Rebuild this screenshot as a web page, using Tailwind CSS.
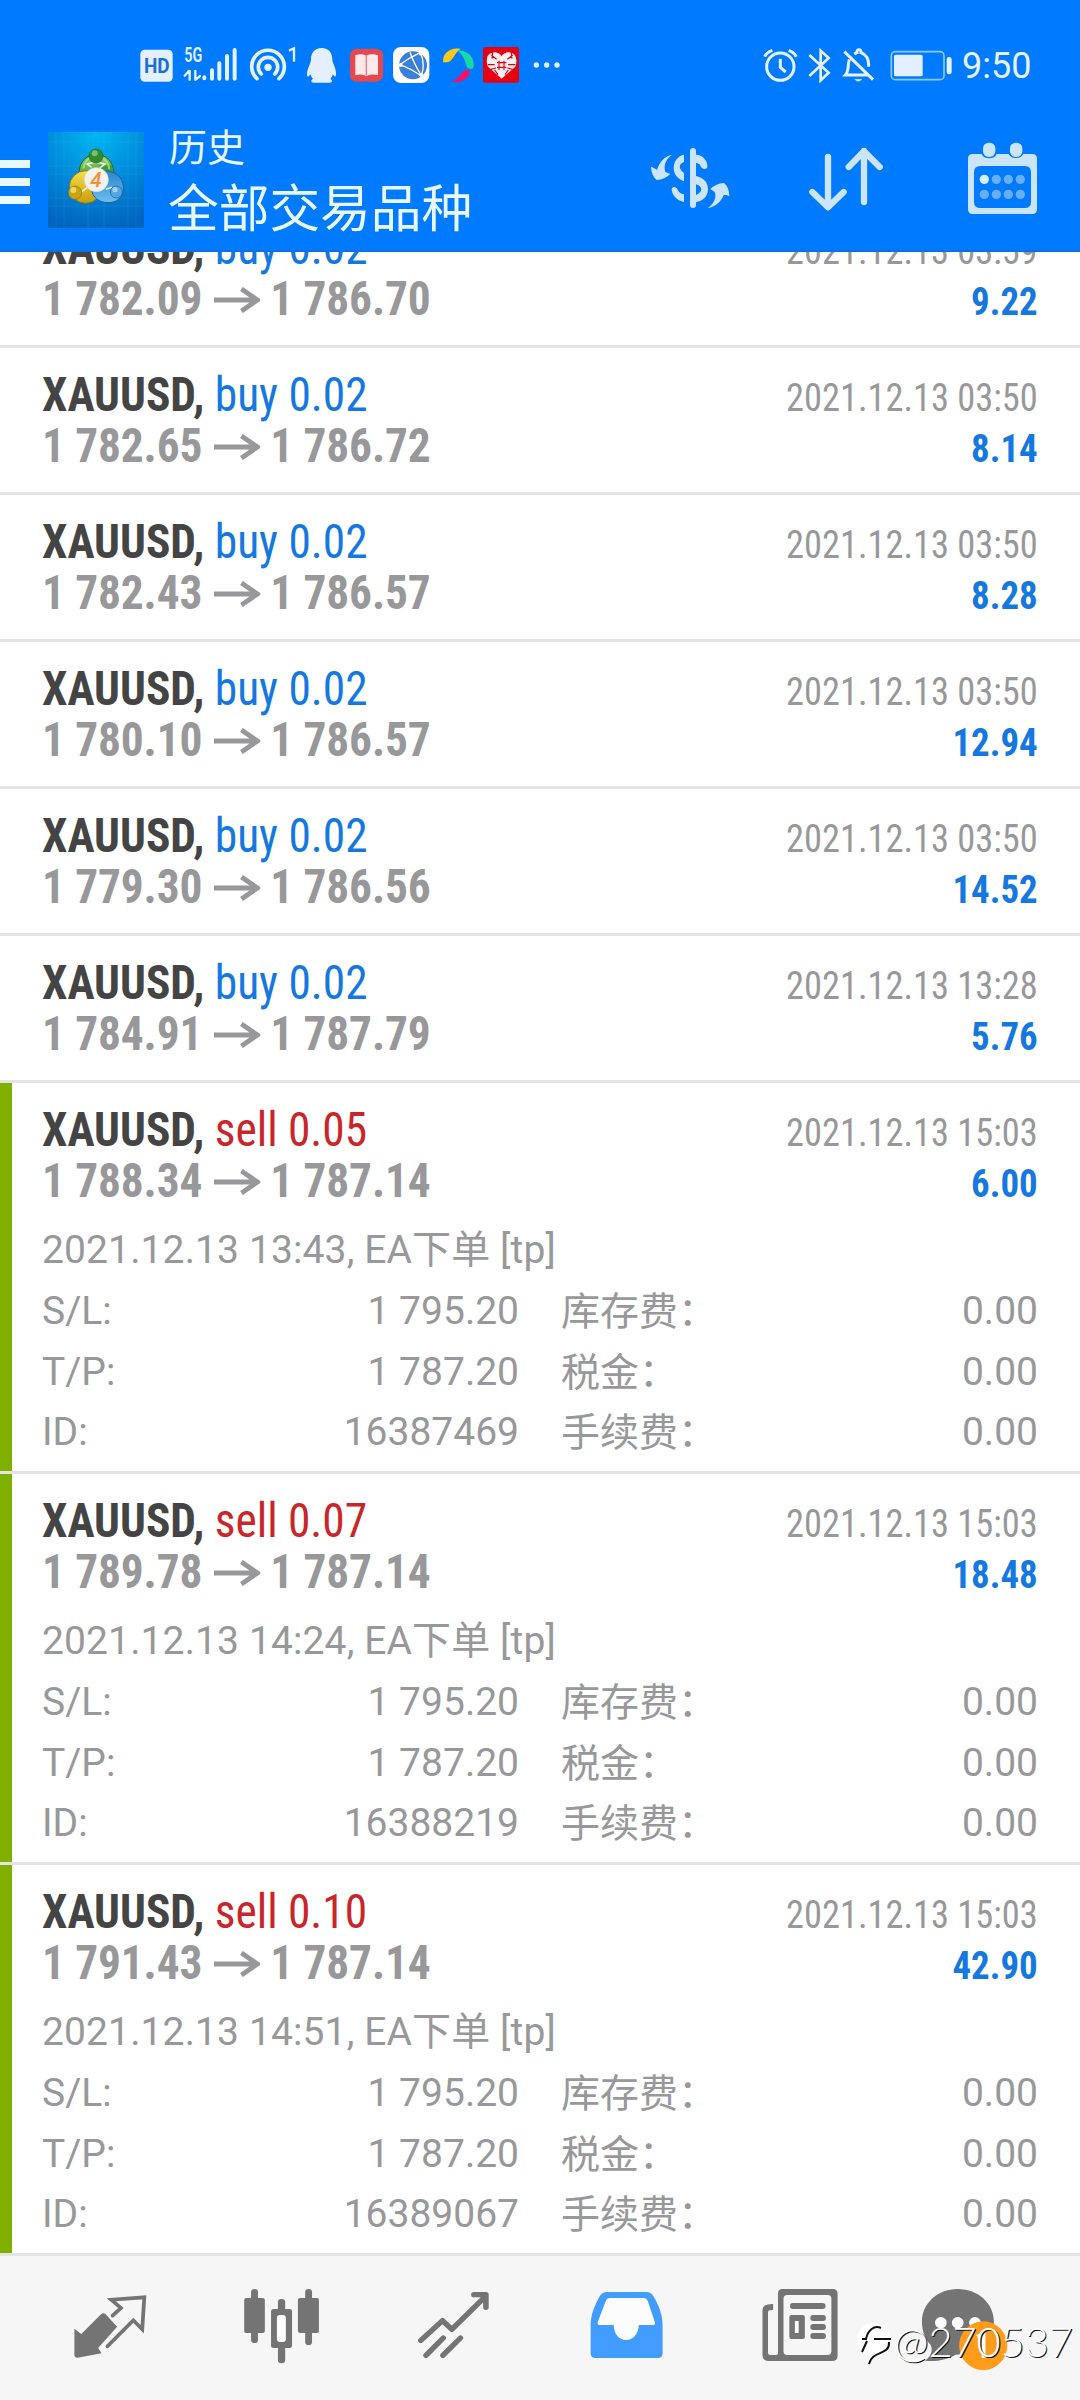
<!DOCTYPE html>
<html lang="zh-CN">
<head>
<meta charset="utf-8">
<title>历史</title>
<script src="https://cdn.jsdelivr.net/npm/@tailwindcss/browser@4"></script>
</head>
<body class="w-[1080px] h-[2400px] overflow-hidden bg-white font-['Roboto','Noto_Sans_CJK_SC',sans-serif]">
<div class="relative w-[1080px] h-[2400px] flex flex-col overflow-hidden">

<header class="h-[252px] shrink-0 bg-[#007aff] border-b-2 border-[#0c70e4] relative z-10">
  <div class="flex h-[90px] pt-[45px] pl-[140px] text-[#e4f3ff]">
    <!-- HD -->
    <svg class="w-[42px] h-[40px] shrink-0" viewBox="60 45 126 120"><rect x="61" y="59" width="97" height="96" rx="13" fill="#e4f0ff"/><text x="72" y="128" font-family="Roboto" font-weight="700" font-size="60" textLength="77" lengthAdjust="spacingAndGlyphs" fill="#1a6fd8">HD</text></svg>
    <!-- 5G signal -->
    <svg class="w-[62px] h-[40px] shrink-0 overflow-visible" viewBox="186 45 186 120"><text x="193" y="97" font-family="Roboto" font-weight="600" font-size="60" textLength="54" lengthAdjust="spacingAndGlyphs" fill="currentColor">5G</text><g stroke="currentColor" stroke-width="12" stroke-linecap="round"><path d="M253 142v3M276 121v25M298 100v46M321 78v68M344 60v86"/><path d="M209 123v26M194 137l12-13M226 123v26M240 138l-12 10" stroke-width="7"/></g></svg>
    <!-- hotspot -->
    <svg class="w-[58px] h-[40px] shrink-0" viewBox="372 45 174 120"><g fill="none" stroke="currentColor" stroke-width="11" stroke-linecap="round"><path d="M411 146a49 49 0 1 1 66 0M424 132a29 29 0 1 1 40 0"/></g><circle cx="444" cy="112" r="11" fill="currentColor"/><path d="M507 62l15-7v40" fill="none" stroke="currentColor" stroke-width="7"/></svg>
    <!-- penguin -->
    <svg class="w-[42px] h-[40px] shrink-0" viewBox="546 45 126 120"><path d="M605 54c22 0 32 15 32 34 0 8 3 12 5 18 5 12 8 25 5 33-3 3-7-4-9-6-1 6-4 11-7 14 8 4 6 11-2 11h-48c-8 0-10-7-2-11-3-3-6-8-7-14-2 2-6 9-10 6-3-8 1-21 6-33 2-6 5-10 5-18 0-19 10-34 32-34z" fill="#e4f0ff"/></svg>
    <!-- book -->
    <svg class="w-[44px] h-[40px] shrink-0" viewBox="672 45 132 120"><rect x="690" y="56" width="99" height="99" rx="20" fill="#e5484f"/><path d="M706 76q18-7 33 1 15-8 35-1v60q-20-6-35 2-15-8-33-2z" fill="#ffe9ea"/><path d="M739 77v60" stroke="#ef7a80" stroke-width="4"/></svg>
    <!-- globe -->
    <svg class="w-[50px] h-[40px] shrink-0" viewBox="804 45 150 120"><rect x="819" y="51" width="109" height="108" rx="24" fill="#fff"/><circle cx="879" cy="106" r="42" fill="#3b7fdd"/><path d="M839 104q30-22 63-37M839 104q30 10 65 34M902 68q14 36 2 70M870 67q10 30 34 70" fill="none" stroke="#fff" stroke-width="4"/><circle cx="842" cy="105" r="6" fill="#fff"/><circle cx="903" cy="71" r="6" fill="#fff"/><circle cx="904" cy="135" r="6" fill="#fff"/></svg>
    <!-- swirl -->
    <svg class="w-[42px] h-[40px] shrink-0" viewBox="954 45 126 120"><path d="M969 95c0-26 22-44 53-38-20 10-22 40-43 40-5 0-9 0-10-2z" fill="#ffc917"/><path d="M1013 62c28-2 50 18 48 44-1 14-7 12-16 9-10-6-6-34-32-53z" fill="#1bd6a6"/><path d="M992 153c24-2 34-30 45-33 10-2 15 4 11 12-9 20-34 29-56 21z" fill="#fb0f5e"/></svg>
    <!-- heart -->
    <svg class="w-[46px] h-[40px] shrink-0" viewBox="1080 45 138 120"><rect x="1089" y="51" width="108" height="107" rx="6" fill="#e60012"/><path d="M1145 146l-41-36c-5-10-5-28 1-35 12-11 28-11 40 3 11-14 28-14 39-3 6 7 7 25 2 35z" fill="#fff0f0"/><path d="M1137 92v28M1152 92v28M1131 98h28M1131 112h28M1104 104h20M1164 104h22M1114 76l16 12M1178 76l-16 12M1118 66l-2 20M1174 66l2 20M1124 120l10 14M1165 120l-10 14M1112 118l16-4M1178 118l-16-4" stroke="#e60012" stroke-width="3.5"/></svg>
    <svg class="w-[44px] h-[40px] shrink-0" viewBox="1218 45 132 120" fill="currentColor"><circle cx="1249" cy="105" r="8"/><circle cx="1280" cy="105" r="8"/><circle cx="1311" cy="105" r="8"/></svg>
    <!-- alarm -->
    <svg class="w-[40px] h-[40px] shrink-0 ml-[190px]" viewBox="60 45 120 120" fill="none" stroke="currentColor" stroke-width="9"><circle cx="121" cy="110" r="41"/><path d="M121 86v26l16 14M74 80q6-13 23-19M146 61q16 6 23 19" stroke-width="9"/></svg>
    <!-- bluetooth -->
    <svg class="w-[37px] h-[40px] shrink-0" viewBox="180 45 111 120" fill="none" stroke="currentColor" stroke-width="8"><path d="M208 75l58 53-24 23V62l24 22-58 54"/></svg>
    <!-- bell off -->
    <svg class="w-[48px] h-[40px] shrink-0" viewBox="291 45 144 120" fill="none" stroke="currentColor" stroke-width="9"><path d="M313 65l86 84M343 72q5-3 8-4c-2-12 14-12 12 0 16 6 23 16 23 42M328 88c-6 20 0 34-12 47h66"/><path d="M344 148q11 12 22 0z" fill="currentColor" stroke-width="1"/></svg>
    <!-- battery -->
    <svg class="w-[70px] h-[40px] shrink-0" viewBox="435 45 210 120"><rect x="454" y="65" width="158" height="84" rx="12" fill="none" stroke="#8cc8ff" stroke-width="5"/><rect x="462" y="74" width="86" height="65" rx="5" fill="#e4f0ff"/><rect x="620" y="81" width="15" height="52" rx="7" fill="currentColor"/></svg>
    <span class="ml-[7px] text-[36px] leading-[43px] whitespace-nowrap">9:50</span>
  </div>

  <div class="flex h-[160px]">
    <svg class="w-[30px] h-[44px] mt-[70px] shrink-0" viewBox="0 0 30 44" fill="#e8f8ff"><path d="M0 0h30v8H0zM0 18h30v8H0zM0 36h30v8H0z"/></svg>
    <svg class="w-[96px] h-[96px] mt-[42px] ml-[18px] shrink-0" viewBox="144 66 288 288">
      <defs><radialGradient id="sky" cx=".5" cy="0" r="1"><stop offset="0" stop-color="#00b8f2"/><stop offset=".6" stop-color="#0085d8"/><stop offset="1" stop-color="#0066be"/></radialGradient>
      <linearGradient id="gr" x2="0" y2="1"><stop stop-color="#8ccc62"/><stop offset="1" stop-color="#3a9432"/></linearGradient>
      <linearGradient id="ye" x2="0" y2="1"><stop stop-color="#f3df4b"/><stop offset="1" stop-color="#c99e0c"/></linearGradient>
      <linearGradient id="bl" x2="0" y2="1"><stop stop-color="#2a84cb"/><stop offset="1" stop-color="#6cc0ee"/></linearGradient></defs>
      <path fill="url(#sky)" d="M144 66h288v288H144z"/>
      <path d="M168 66v288M192 66v288M264 66v288M312 66v288M384 66v288M408 66v288M144 96h288M144 168h288M144 192h288M144 264h288M144 288h288" stroke="#5ad0ff" stroke-opacity=".16" stroke-width="2"/>
      <circle cx="289" cy="184" r="51" fill="url(#gr)" stroke="#1d6b1c" stroke-width="3"/>
      <circle cx="257" cy="231" r="49" fill="url(#ye)" stroke="#8d7410" stroke-width="3"/>
      <path d="M296 166h40q6 30-8 50z" fill="#3f9a36"/>
      <path d="M318 182c36 4 54 26 52 54s-20 42-46 42-48-16-50-42z" fill="url(#bl)" stroke="#1a5f9c" stroke-width="3"/>
      <path d="M275 172l-14-10q27-10 54 0l-16 12M236 252l26-20M318 238l18-6" fill="none" stroke="#fff" stroke-opacity=".8" stroke-width="5"/>
      <path d="M250 175q4-24 20-30M308 146q18 10 20 32" fill="none" stroke="#b6e59c" stroke-opacity=".7" stroke-width="6"/>
      <circle cx="288" cy="138" r="21" fill="#348a2e" stroke="#1d6b1c" stroke-width="2"/><circle cx="284" cy="130" r="9" fill="#9bd48a" fill-opacity=".7"/>
      <circle cx="225" cy="248" r="20" fill="#c9a414" stroke="#8d7410" stroke-width="2"/><circle cx="220" cy="240" r="9" fill="#f6e778" fill-opacity=".8"/>
      <circle cx="349" cy="246" r="18" fill="#52a5e2" stroke="#1a5f9c" stroke-width="2"/><circle cx="345" cy="239" r="8" fill="#b3dcf8" fill-opacity=".8"/>
      <circle cx="289" cy="209" r="36" fill="#f5f1ec" stroke="#d5dce0" stroke-width="2"/>
      <text x="288" y="230" text-anchor="middle" font-family="Roboto" font-style="italic" font-weight="500" font-size="62" fill="#f0913d">4</text>
    </svg>
    <div class="ml-[25px] w-[480px] text-[#e8f8ff]">
      <div class="mt-[38px] text-[38px] leading-[40px] h-[40px]">历史</div>
      <div class="mt-[15px] -ml-[1px] text-[50.7px] leading-[54px] h-[54px] whitespace-nowrap">全部交易品种</div>
    </div>
    <svg class="w-[90px] h-[110px] mt-[30px] -ml-[4px] shrink-0" viewBox="75 30 270 330" fill="#cce5ff">
      <path d="M156 135c-21 14-25 34-20 51l15 6c-12 11-24 17-41 18-11-9-16-22-17-40 7 3 13 5 18 10 8-24 22-42 45-45z"/>
      <path d="M263 294c21-14 27-34 21-48l-13-9c12-11 24-17 41-18 11 9 15 22 16 40-7-3-11-5-17-3-9 20-25 36-48 38z"/>
      <path d="M192 134v22c-13 4-20 18 0 33v25c-20-8-31-22-31-41s13-36 31-39zM228 134c19 1 34 15 34 35 0 12-16 10-20 0-2-7-7-9-14-10zM228 198c22 5 36 18 36 40s-16 35-36 39v-22c20-8 22-25 0-32zM192 276c-19-4-34-17-37-36-1-12 14-12 18-1 3 8 9 12 19 14z"/>
      <rect x="210" y="114" width="18" height="180" rx="9"/>
    </svg>
    <svg class="w-[80px] h-[110px] mt-[30px] ml-[70px] shrink-0" viewBox="555 30 240 330" fill="none" stroke="#cce5ff" stroke-width="19" stroke-linecap="round" stroke-linejoin="round"><path d="M624 141v150M577 246l47 46 47-46M732 276V123M686 171l46-47 47 47"/></svg>
    <svg class="w-[80px] h-[110px] mt-[30px] ml-[77px] shrink-0" viewBox="1026 30 240 330" fill="#cce5ff">
      <path fill-rule="evenodd" d="M1058 132h27a24 20 0 0 0 45 0h36a24 20 0 0 0 44 0h27q14 0 14 14v152q0 14-14 14h-179q-14 0-14-14V146q0-14 14-14zM1082 168q-20 0-20 18v90q0 18 20 18h132q19 0 19-18v-90q0-18-19-18z"/>
      <rect x="1089" y="98" width="37" height="43" rx="17"/><rect x="1170" y="98" width="37" height="43" rx="17"/>
      <circle cx="1093" cy="208" r="14" fill="#d8ecff"/>
      <g fill="#66afff"><circle cx="1129" cy="208" r="14"/><circle cx="1165" cy="208" r="14"/><circle cx="1201" cy="208" r="14"/><circle cx="1093" cy="253" r="14"/><circle cx="1129" cy="253" r="14"/><circle cx="1165" cy="253" r="14"/><circle cx="1201" cy="253" r="14"/></g>
    </svg>
  </div>
</header>

<main id="history" class="-mt-[51px] h-[2055px] shrink-0"></main>

<nav class="flex h-[144px] shrink-0 pl-[24px] bg-[#f6f6f6] text-[#747474]">
  <svg class="w-[172px] h-[144px]" viewBox="69.7 48 499.4 432" preserveAspectRatio="none"><path d="M216 266l20 16 58-60q6-5 12 0l34 38-55 64 10 16-70 13q-9 0-9-9z" fill="currentColor"/><path d="M327 227l24-23-28-25 96-7-6 96-26-27-75 78" fill="none" stroke="currentColor" stroke-width="11" stroke-linecap="round"/></svg>
  <svg class="w-[172px] h-[144px]" viewBox="569.1 48 499.4 432" preserveAspectRatio="none"><g fill="currentColor"><rect x="709" y="174" width="60" height="105" rx="6"/><rect x="729" y="147" width="20" height="162" rx="10"/><rect x="865" y="174" width="61" height="105" rx="6"/><rect x="886" y="147" width="20" height="168" rx="10"/><rect x="807" y="177" width="21" height="193" rx="10"/><rect x="787" y="207" width="61" height="117" rx="7"/></g><rect x="804" y="225" width="26" height="81" rx="9" fill="#fcfcfc"/></svg>
  <svg class="w-[172px] h-[144px]" viewBox="1068.6 48 499.4 432" preserveAspectRatio="none" fill="none" stroke="currentColor" stroke-width="16" stroke-linecap="round" stroke-linejoin="round"><path d="M1222 301l63-59 27 26 97-98M1376 164h35v38M1237 346l50-52M1286 346l51-52"/></svg>
  <svg class="w-[172px] h-[144px]" viewBox="0 48 499.4 432" preserveAspectRatio="none"><path d="M190 174h123l24 81h-50l-18 45h-38l-18-45h-45z" fill="#fcfcfc"/><path fill="#439cff" fill-rule="evenodd" d="M195 156h113q14 0 21 12c16 27 27 58 27 86v86q0 14-14 14H161q-14 0-14-14v-86c0-28 12-60 27-86q7-12 21-12zM203 174q-9 0-12 9l-23 62q-3 10 7 10h39c0 25 14 45 36 45s36-20 37-45h40q10 0 6-10l-20-62q-4-9-13-9z"/></svg>
  <svg class="w-[172px] h-[144px]" viewBox="499.4 48 499.4 432" preserveAspectRatio="none"><path fill="currentColor" fill-rule="evenodd" d="M704 147h146q14 0 14 14v186q0 16-16 16H665q-19 0-19-18V210q0-19 31-18v18q-15-1-15 6v122q0 7 6 7h17q6 0 6-7V161q0-14 13-14zM718 165q-11 0-11 11v158q0 11 11 11h117q11 0 11-11V176q0-11-11-11z"/><g fill="currentColor"><rect x="726" y="189" width="103" height="18" rx="8"/><rect x="724" y="225" width="45" height="72" rx="6"/><rect x="785" y="225" width="45" height="18" rx="8"/><rect x="785" y="252" width="45" height="18" rx="8"/><rect x="785" y="279" width="45" height="18" rx="8"/></g><rect x="740" y="243" width="11" height="36" fill="#fff"/></svg>
  <svg class="w-[172px] h-[144px]" viewBox="998.9 48 499.4 432" preserveAspectRatio="none"><path d="M1213 147c60 0 105 44 105 98 0 60-48 99-112 99-20 14-55 22-88 18 18-14 24-32 16-48-17-18-25-44-25-69 0-54 45-98 104-98z" fill="currentColor"/><g fill="#fff"><circle cx="1164" cy="248" r="17"/><circle cx="1213" cy="248" r="17"/><circle cx="1263" cy="248" r="17"/></g><ellipse cx="1287" cy="317" rx="70" ry="73" fill="#ff9c1b"/><path d="M1269 290l19-8v72" fill="none" stroke="#fff" stroke-width="11"/></svg>
</nav>

<!-- watermark -->
<div class="absolute left-[855px] top-[2315px] z-20 flex h-[52px] items-center">
  <svg class="w-[37px] h-[52px]" viewBox="0 0 37 52"><circle cx="19" cy="25" r="17" fill="#fff"/><path d="M7 24h5M19 24h17" fill="none" stroke="#111" stroke-width="2.2"/><path d="M11 24C13 15 19 10 26 13M34 27c1 14-17 8-20 22M7 37l5-11" fill="none" stroke="#111" stroke-width="2"/></svg>
  <span class="ml-[2px] text-[41.5px] leading-[52px] text-white font-['Lato'] font-light [text-shadow:1.2px_1.2px_0_#111] whitespace-nowrap">@270537</span>
</div>
</div>

<script>
const rows = [
  ["buy 0.02","1 782.09","1 786.70","2021.12.13 03:59","9.22"],
  ["buy 0.02","1 782.65","1 786.72","2021.12.13 03:50","8.14"],
  ["buy 0.02","1 782.43","1 786.57","2021.12.13 03:50","8.28"],
  ["buy 0.02","1 780.10","1 786.57","2021.12.13 03:50","12.94"],
  ["buy 0.02","1 779.30","1 786.56","2021.12.13 03:50","14.52"],
  ["buy 0.02","1 784.91","1 787.79","2021.12.13 13:28","5.76"],
  ["sell 0.05","1 788.34","1 787.14","2021.12.13 15:03","6.00","2021.12.13 13:43","16387469"],
  ["sell 0.07","1 789.78","1 787.14","2021.12.13 15:03","18.48","2021.12.13 14:24","16388219"],
  ["sell 0.10","1 791.43","1 787.14","2021.12.13 15:03","42.90","2021.12.13 14:51","16389067"]
];
const line = (a,b,c,d) => `<div class="grid grid-cols-[130px_347px_1fr_auto] h-[60.5px]"><span>${a}</span><span class="text-right">${b}</span><span class="pl-[42px] -mt-[3px] font-['Noto_Sans_CJK_SC']">${c}：</span><span class="text-right">${d}</span></div>`;
document.getElementById('history').innerHTML = rows.map(([side,from,to,time,profit,open,id]) => `
<section class="relative border-b-3 border-[#e4e4e4] ${open ? 'h-[391px]' : 'h-[147px]'}">
  ${open ? '<div class="absolute left-0 top-0 w-[12px] h-[388px] bg-[#7fb000]"></div>' : ''}
  <div class="flex justify-between pl-[42px] pr-[42px] [font-stretch:75%] whitespace-nowrap">
    <div class="pt-[21px] text-[48px] leading-[51px] origin-left scale-x-[0.945]">
      <div class="h-[51px]"><b class="font-bold text-[#444]">XAUUSD,</b> <span class="${side[0]==='b' ? 'text-[#1478e0]' : 'text-[#c8262b]'}">${side}</span></div>
      <div class="h-[51px] flex font-bold text-[#98989b] tracking-[-0.12px]"><span>${from}</span><svg class="w-[49px] h-[26px] mt-[14px] ml-[12px] mr-[11px]" viewBox="0 0 49 26"><path d="M0 13h45M29 2l17 11-17 11" fill="none" stroke="currentColor" stroke-width="5"/></svg><span>${to}</span></div>
    </div>
    <div class="pt-[25px] text-[39px] leading-[51px] text-right">
      <div class="h-[51px] text-[#98989b] origin-right scale-x-[0.933]">${time}</div>
      <div class="h-[51px] font-bold text-[#1478e0] origin-right scale-x-[0.945]">${profit}</div>
    </div>
  </div>
  ${open ? `<div class="mt-[10px] pl-[42px] pr-[42px] text-[39px] leading-[60px] text-[#98989b] whitespace-nowrap"><div class="h-[61px] tracking-[0.12px]">${open}, EA下单 [tp]</div>${line('S/L:','1 795.20','库存费','0.00')}${line('T/P:','1 787.20','税金','0.00')}${line('ID:',id,'手续费','0.00')}</div>` : ''}
</section>`).join('');
</script>
</body>
</html>
